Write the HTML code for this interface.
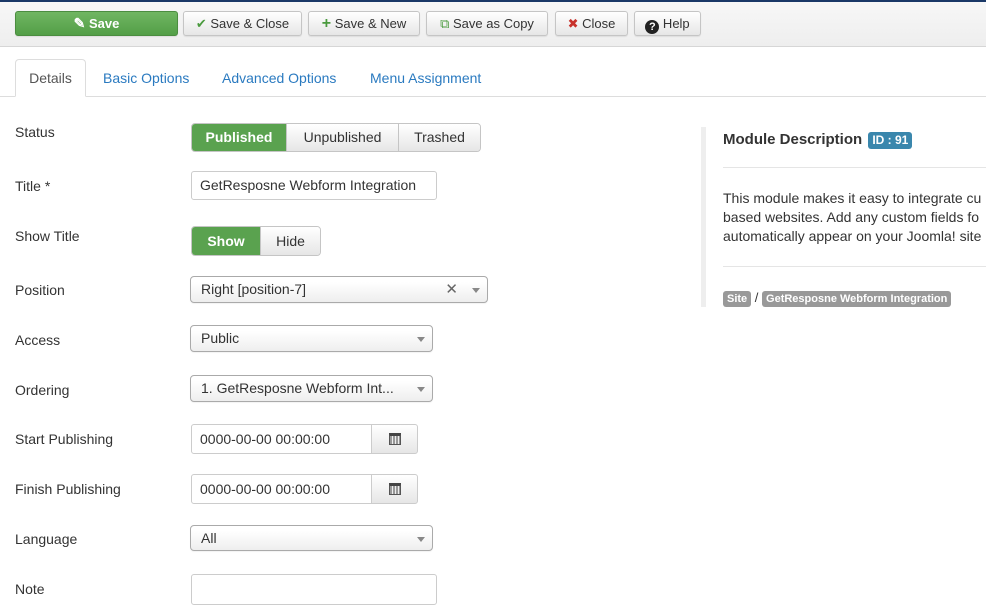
<!DOCTYPE html>
<html><head><meta charset="utf-8"><style>
*{box-sizing:border-box;margin:0;padding:0}
body{width:986px;height:613px;overflow:hidden;background:#fff;font-family:"Liberation Sans",Arial,sans-serif;font-size:13px;color:#333;position:relative}
.abs{position:absolute}
.tb{left:0;top:0;width:986px;height:47px;background:linear-gradient(#f7f7f7,#eeeeee);border-top:2px solid #1a3867;border-bottom:1px solid #d6d6d6}
.btn{position:absolute;top:11px;height:25px;border:1px solid #c5c5c5;border-radius:3px;background:linear-gradient(#fff,#e6e6e6);font-size:13px;line-height:23px;text-align:center;color:#333;box-shadow:0 1px 1px rgba(0,0,0,.08)}
.green{background:linear-gradient(#70b662,#539f47);border-color:#4b8d40;color:#fff;font-weight:bold}
.tabline{left:0;top:96px;width:986px;height:1px;background:#ddd}
.tab{top:59px;left:15px;width:71px;height:38px;border:1px solid #ddd;border-bottom-color:#fff;border-radius:4px 4px 0 0;background:#fff;text-align:center;line-height:36px;color:#555;font-size:14px}
.tl{top:70px;font-size:14px;color:#2a7ac0}
.lbl{left:15px;font-size:14px;color:#333}
.grp{position:absolute;display:flex;border:1px solid #c5c5c5;border-radius:4px;overflow:hidden}
.grp div{background:linear-gradient(#fff,#e6e6e6);text-align:center;font-size:14px;color:#333;border-left:1px solid #c5c5c5}
.grp div:first-child{border-left:none}
.grp .on{background:#5aa24f;color:#fff;font-weight:bold;border-color:#4b8d40}
.inp{position:absolute;border:1px solid #ccc;border-radius:3px;background:#fff;font-size:14px;padding-left:8px;color:#333}
.sel{position:absolute;border:1px solid #aaa;border-radius:4px;background:linear-gradient(#fff 20%,#eee);font-size:14px;padding-left:10px;color:#333;box-shadow:0 1px 1px rgba(0,0,0,.05)}
.sel:after{content:"";position:absolute;right:7px;top:11px;border-left:4px solid transparent;border-right:4px solid transparent;border-top:5px solid #888}
.cal{position:absolute;left:371px;width:47px;border:1px solid #ccc;border-radius:0 3px 3px 0;background:linear-gradient(#fff,#e6e6e6)}
.cal i{position:absolute;left:17px;top:8px;width:12px;height:12px;border:1px solid #555;border-top:3px solid #444;background:repeating-linear-gradient(90deg,#999 0 2px,#eee 2px 3px)}
.badge{display:inline-block;background:#999;color:#fff;font-weight:bold;font-size:11px;padding:1px 4px;border-radius:3px;line-height:14px}
</style></head><body>
<div class="abs tb"></div>
<div class="btn green" style="left:15px;width:163px"><span style="font-size:14px">&#9998;</span> Save</div>
<div class="btn" style="left:183px;width:119px"><span style="color:#4a9a3e">&#10004;</span> Save &amp; Close</div>
<div class="btn" style="left:308px;width:112px"><b style="color:#4a9a3e;font-size:16px">+</b> Save &amp; New</div>
<div class="btn" style="left:426px;width:122px"><span style="color:#4a9a3e">&#10697;</span> Save as Copy</div>
<div class="btn" style="left:555px;width:73px"><span style="color:#c8312b">&#10006;</span> Close</div>
<div class="btn" style="left:634px;width:67px"><b style="display:inline-block;width:14px;height:14px;border-radius:50%;background:#222;color:#fff;font-size:11px;line-height:14px;vertical-align:-2px">?</b> Help</div>

<div class="abs tabline"></div>
<div class="abs tab">Details</div>
<div class="abs tl" style="left:103px">Basic Options</div>
<div class="abs tl" style="left:222px">Advanced Options</div>
<div class="abs tl" style="left:370px">Menu Assignment</div>

<div class="abs lbl" style="top:124px">Status</div>
<div class="abs lbl" style="top:178px">Title *</div>
<div class="abs lbl" style="top:228px">Show Title</div>
<div class="abs lbl" style="top:282px">Position</div>
<div class="abs lbl" style="top:332px">Access</div>
<div class="abs lbl" style="top:382px">Ordering</div>
<div class="abs lbl" style="top:431px">Start Publishing</div>
<div class="abs lbl" style="top:481px">Finish Publishing</div>
<div class="abs lbl" style="top:531px">Language</div>
<div class="abs lbl" style="top:581px">Note</div>

<div class="grp" style="left:191px;top:123px;height:29px;line-height:27px"><div class="on" style="width:94px">Published</div><div style="width:112px">Unpublished</div><div style="width:82px">Trashed</div></div>
<div class="inp" style="left:191px;top:171px;width:246px;height:29px;line-height:27px">GetResposne Webform Integration</div>
<div class="grp" style="left:191px;top:226px;height:30px;line-height:28px"><div class="on" style="width:68px">Show</div><div style="width:60px">Hide</div></div>
<div class="sel" style="left:190px;top:276px;width:298px;height:27px;line-height:25px">Right [position-7]<span style="position:absolute;right:29px;color:#666;font-size:15px">&#10005;</span></div>
<div class="sel" style="left:190px;top:325px;width:243px;height:27px;line-height:25px">Public</div>
<div class="sel" style="left:190px;top:375px;width:243px;height:27px;line-height:25px">1. GetResposne Webform Int...</div>
<div class="inp" style="left:191px;top:424px;width:181px;height:30px;line-height:28px;border-radius:3px 0 0 3px">0000-00-00 00:00:00</div>
<div class="cal" style="top:424px;height:30px"><i></i></div>
<div class="inp" style="left:191px;top:474px;width:181px;height:30px;line-height:28px;border-radius:3px 0 0 3px">0000-00-00 00:00:00</div>
<div class="cal" style="top:474px;height:30px"><i></i></div>
<div class="sel" style="left:190px;top:525px;width:243px;height:26px;line-height:24px">All</div>
<div class="inp" style="left:191px;top:574px;width:246px;height:31px"></div>

<div class="abs" style="left:701px;top:127px;width:5px;height:180px;background:#eee"></div>
<div class="abs" style="left:723px;top:131px;font-size:15px;font-weight:bold;color:#333;white-space:nowrap">Module Description <span class="badge" style="background:#3a87ad;font-size:12px;line-height:15px;margin-left:2px">ID : 91</span></div>
<div class="abs" style="left:723px;top:167px;width:263px;height:1px;background:#e5e5e5"></div>
<div class="abs" style="left:723px;top:189px;font-size:14px;line-height:19px;white-space:nowrap;color:#333">This module makes it easy to integrate cu<br>based websites. Add any custom fields fo<br>automatically appear on your Joomla! site</div>
<div class="abs" style="left:723px;top:266px;width:263px;height:1px;background:#e5e5e5"></div>
<div class="abs" style="left:723px;top:290px;white-space:nowrap;font-size:13px"><span class="badge">Site</span> / <span class="badge">GetResposne Webform Integration</span></div>
</body></html>
